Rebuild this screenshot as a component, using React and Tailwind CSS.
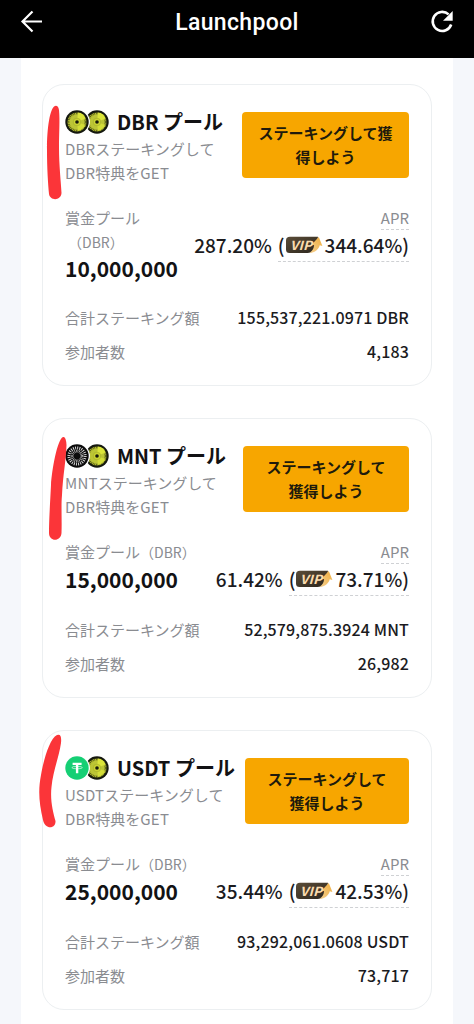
import React from "react";

const pools = [
  {
    coin: "DBR",
    prize: "10,000,000",
    apr: "287.20%",
    vipApr: "344.64%",
    total: "155,537,221.0971",
    members: "4,183",
    labelSplit: true,
    button: ["ステーキングして獲", "得しよう"],
    buttonWidth: "w-[167px]",
    height: "h-[302px]",
  },
  {
    coin: "MNT",
    prize: "15,000,000",
    apr: "61.42%",
    vipApr: "73.71%",
    total: "52,579,875.3924",
    members: "26,982",
    button: ["ステーキングして", "獲得しよう"],
    buttonWidth: "w-[166px]",
    height: "h-[280px]",
  },
  {
    coin: "USDT",
    prize: "25,000,000",
    apr: "35.44%",
    vipApr: "42.53%",
    total: "93,292,061.0608",
    members: "73,717",
    button: ["ステーキングして", "獲得しよう"],
    buttonWidth: "w-[164px]",
    height: "h-[280px]",
  },
];

const DbrCoin = () => (
  <svg className="w-6 h-6 shrink-0" viewBox="0 0 24 24">
    <circle cx="12" cy="12" r="11.7" fill="#15180f" />
    <circle cx="12" cy="12" r="9.6" fill="#b4bc30" />
    <circle cx="12" cy="12" r="8.8" fill="none" stroke="#30360f" strokeWidth="2.6" strokeDasharray="0.6 1.15" />
    <circle cx="12" cy="12" r="7.4" fill="#bcc535" />
    <path d="M12 12l1-9.500a9 9 0 0 1 7.500 6z" fill="#dbe53a" />
    <path d="M12 12l8 3a9 9 0 0 1-7 6z" fill="#d3dd37" />
    <circle cx="12" cy="12" r="3.8" fill="#cbd432" stroke="#8e9626" strokeWidth=".4" />
    <circle cx="12" cy="12" r="1.8" fill="#17190c" />
  </svg>
);

const MntCoin = () => (
  <svg className="w-6 h-6 shrink-0" viewBox="0 0 24 24">
    <circle cx="12" cy="12" r="11.7" fill="#0b0b0b" />
    <circle cx="12" cy="12" r="8.1" fill="none" stroke="#e0e0e0" strokeWidth="3" strokeDasharray="0.95 1.17" />
    <circle cx="12" cy="12" r="4.9" fill="none" stroke="#c4c4c4" strokeWidth="2.8" strokeDasharray="0.7 0.84" />
  </svg>
);

const UsdtCoin = () => (
  <svg className="w-6 h-6 shrink-0" viewBox="0 0 24 24">
    <circle cx="12" cy="12" r="11.7" fill="#15cf74" />
    <path d="M7.6 6.8h9v2.3h-3.3v8.1h-2.4V9.1H7.6z" fill="#fff" />
    <ellipse cx="12.1" cy="11.6" rx="5.3" ry="1.2" fill="none" stroke="#fff" strokeWidth=".6" />
  </svg>
);

const coinIcons = { DBR: DbrCoin, MNT: MntCoin, USDT: UsdtCoin };

const VipBadge = () => (
  <svg className="w-[38px] h-[18px] shrink-0 -mt-px" viewBox="0 0 38 18">
    <defs>
      <linearGradient id="vipBody" x1="0" x2="1" y1="0" y2="1">
        <stop offset="0" stopColor="#5b4d38" />
        <stop offset="1" stopColor="#2b251d" />
      </linearGradient>
      <linearGradient id="vipArrow" x1="0" x2="1" y1="1" y2="0">
        <stop offset="0" stopColor="#f5d08f" />
        <stop offset="1" stopColor="#efad3e" />
      </linearGradient>
    </defs>
    <path d="M5 .8H33l-1.500 8q-1.500 8.200-9 8.200H4.500Q1 17 1 13.500v-9Q1 .8 5 .8z" fill="url(#vipBody)" />
    <path d="M24.500 17c3.500-2.500 4.300-5 4.600-8l-3.100.3L33.800 1l3.600 8.900-2.700-.7c-.8 4-4.700 7.300-10.200 7.800z" fill="url(#vipArrow)" />
    <text
      x="5"
      y="13.6"
      fontSize="12.5"
      fontWeight="700"
      fontStyle="italic"
      fontFamily="'Noto Sans CJK JP', sans-serif"
      textLength="22"
      lengthAdjust="spacingAndGlyphs"
      fill="#fbdcae"
    >
      VIP
    </text>
  </svg>
);

const PoolCard = ({ pool }) => {
  const Coin = coinIcons[pool.coin];
  return (
    <div
      className={`${pool.height} rounded-[22px] border border-[#eceff1] px-[22px] pt-[21px] flex flex-col`}
    >
      <div className="flex justify-between items-center h-[79px]">
        <div className="whitespace-nowrap">
          <h2 className="flex items-center h-[30px] text-xl leading-[30px] font-bold text-[#121214]">
            <span className="flex items-center mr-2">
              <span className="relative z-10 rounded-full bg-white pr-px">
                <Coin />
              </span>
              <span className="-ml-[5px]">
                <DbrCoin />
              </span>
            </span>
            {pool.coin} プール
          </h2>
          <p className="text-[15px] leading-6 text-[#8a8c91]">
            <span className="tracking-[0.2px]">{pool.coin}</span>ステーキングして
            <br />
            <span className="tracking-[0.2px]">DBR</span>特典を
            <span className="tracking-[0.2px]">GET</span>
          </p>
        </div>
        <button
          className={`${pool.buttonWidth} h-[66px] mb-0.5 shrink-0 rounded bg-[#f7a600] text-[15px] leading-6 font-bold text-[#201a0c] whitespace-nowrap`}
        >
          {pool.button[0]}
          <br />
          {pool.button[1]}
        </button>
      </div>

      <div className="mt-[21px] flex justify-between whitespace-nowrap">
        <div>
          <div className="text-[15px] leading-[23.5px] text-[#8a8c91]">
            賞金プール
            {pool.labelSplit && <br />}
            <span className={pool.labelSplit ? "pl-[3px] text-sm leading-5" : "text-sm leading-5"}>
              （DBR）
            </span>
          </div>
          <div className="text-[21px] leading-[30px] tracking-[0.02px] font-bold text-[#121214]">
            {pool.prize}
          </div>
        </div>
        <div className="flex flex-col items-end">
          <div className="text-[15px] leading-6 h-6 text-[#8a8c91] border-b border-dashed border-[#cfd1d4]">
            APR
          </div>
          <div className="flex h-8 text-[19px] leading-[30px] font-medium text-[#1b1b1e]">
            <span className="mr-1.5">{pool.apr}</span>
            <span className="flex border-b border-dashed border-[#cfd1d4]">
              (
              <span className="flex items-center">
                <VipBadge />
              </span>
              <span className="ml-0.5">{pool.vipApr})</span>
            </span>
          </div>
        </div>
      </div>

      <div className="mt-auto mb-[21px] flex flex-col gap-2.5 text-[15px] leading-6 whitespace-nowrap">
        <div className="flex justify-between">
          <span className="text-[#8a8c91]">合計ステーキング額</span>
          <span className="text-base leading-[23px] tracking-[0.14px] font-medium text-[#1b1b1e]">
            {pool.total} {pool.coin}
          </span>
        </div>
        <div className="flex justify-between">
          <span className="text-[#8a8c91]">参加者数</span>
          <span className="text-base leading-[23px] tracking-[0.14px] font-medium text-[#1b1b1e]">
            {pool.members}
          </span>
        </div>
      </div>
    </div>
  );
};

const Marks = () => (
  <svg
    className="absolute left-0 top-0 z-20 w-[80px] h-[1024px] pointer-events-none"
    viewBox="0 0 80 1024"
    fill="#fb3539"
  >
    <path d="M55 106C50 108 47 127 47 150C47 168 48 183 49 194C50 201 61 201 61.500 193C61 182 59 165 59 148C59 133 60 120 59 110Q58 105 55 106Z" />
    <path d="M63 437C57 440 52 470 51 485C50 505 49 520 49 533C49 542 61 542 61.500 533C62 520 61 505 62 495C63 475 66 460 66.500 445Q66 436 63 437Z" />
    <path d="M57 735C49 739 43 763 41 775C38 790 39 803 43 820C45 830 56 829 55.500 821C53 812 50 800 51.500 787C53 771 59 757 61 743Q62 733 57 735Z" />
  </svg>
);

const App = () => {
  return (
    <div className="relative w-[474px] h-[1024px] overflow-hidden bg-[#f5f7fb] font-['Noto_Sans_CJK_JP',sans-serif]">
      <header className="h-[58px] bg-black text-white flex items-start justify-between px-5 pt-[10px]">
        <svg className="w-6 h-6" viewBox="0 0 24 24" fill="none" stroke="currentColor" strokeWidth="2.2">
          <path d="M22 11.5H3M12.500 1.500L2.500 11.500l10 10" />
        </svg>
        <h1 className="font-[Roboto,sans-serif] text-[23px] leading-[25px] tracking-[0.35px] font-medium">
          Launchpool
        </h1>
        <svg className="w-6 h-6" viewBox="0 0 24 24">
          <path
            d="M18.600 4.400A9.500 9.500 0 1 0 21.200 14.500"
            fill="none"
            stroke="currentColor"
            strokeWidth="2.600"
          />
          <path d="M22.700 1v9.700H13z" fill="currentColor" />
        </svg>
      </header>
      <main className="mx-[21px] h-[966px] bg-white px-[21px] pt-[26px] flex flex-col gap-8">
        {pools.map((pool) => (
          <PoolCard key={pool.coin} pool={pool} />
        ))}
      </main>
      <Marks />
    </div>
  );
};

export default App;
